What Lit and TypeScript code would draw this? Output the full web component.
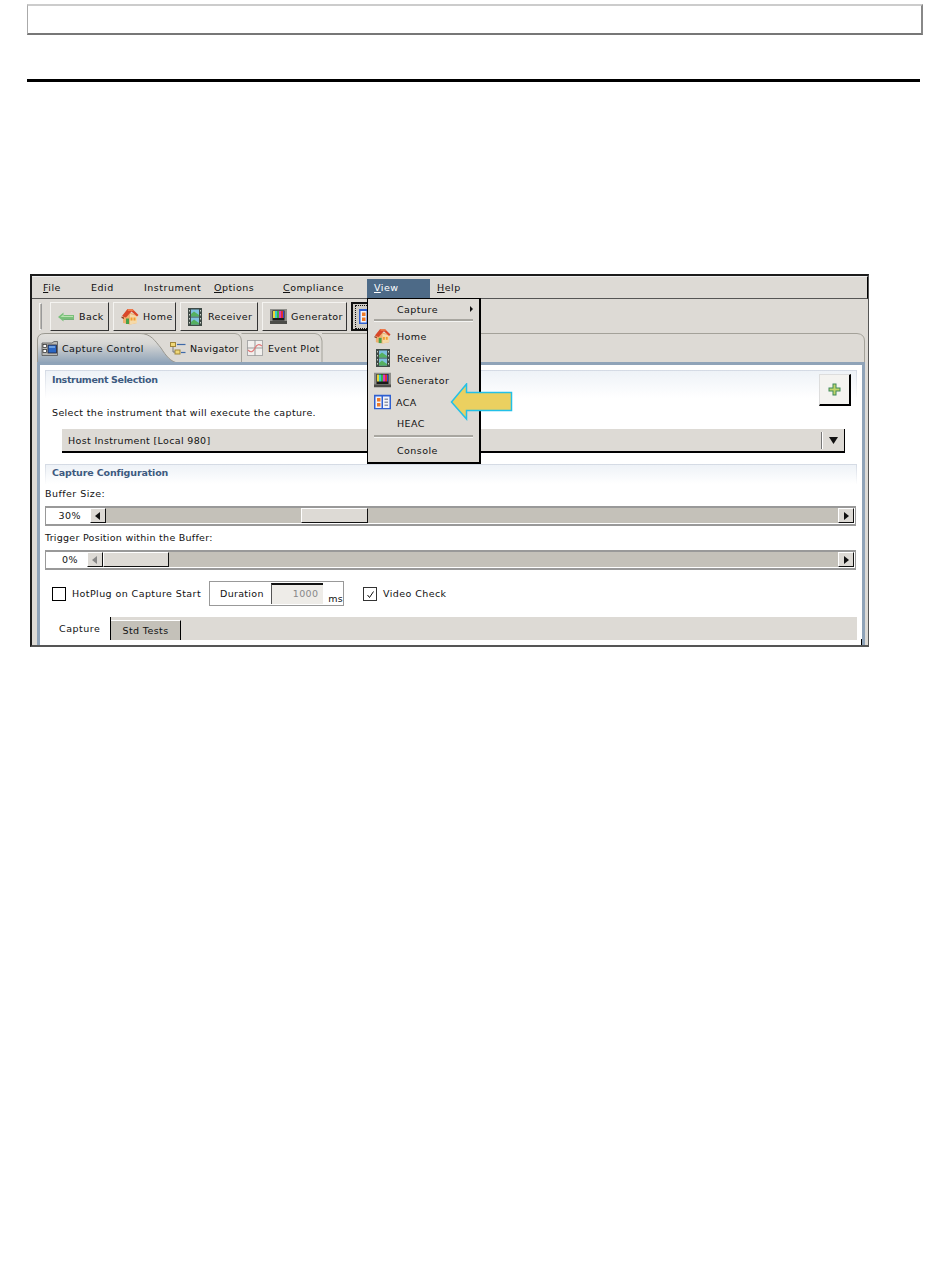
import { LitElement, html, css, svg } from "lit";
import { customElement } from "lit/decorators.js";

const backIcon = html`<svg width="16" height="10" viewBox="0 0 16 10"><path d="M0 5 L5.5 .5 V3 H16 V7.5 H5.5 V9.5 Z" fill="#79c07a"/><path d="M2.5 5 L5.5 2.5 V4 H15 V5Z" fill="#b9e3b0"/><path d="M5.5 7 H16 V7.6 H5.5Z" fill="#4f9a5c"/></svg>`;
const homeIcon = html`<svg width="18" height="17" viewBox="0 0 18 17"><path d="M2 7 L10 5 L16 7 V15 L9 16.5 L2 15Z" fill="#eeb070"/><path d="M9 6 L16 8 V15 L9 16.5Z" fill="#f5d9a8"/><path d="M1 8 L6.5 1 H11.5 L17.5 7 L16 8.5 L10.5 3.5 L5 9.5 L3 9Z" fill="#d8472a"/><path d="M6.5 1 H11.5 L13 3 H7Z" fill="#ee7a4a"/><path d="M.5 8.5 L3 9.5 V11 L.5 10Z" fill="#8c3a20"/><rect x="5" y="10.5" width="3" height="5.5" fill="#48a048"/><rect x="9.5" y="9.5" width="2" height="3" fill="#f2a030"/><rect x="12.5" y="9.5" width="2" height="3" fill="#f2a030"/></svg>`;
const filmIcon = html`<svg width="14" height="18" viewBox="0 0 14 18"><rect x="0" y="0" width="14" height="18" fill="#3f4a46"/><rect x="3" y="1.5" width="8" height="7" fill="#7fc0e0"/><rect x="3" y="9.5" width="8" height="7" fill="#7fc0e0"/><path d="M3 8.5 V6 L6 3.5 L11 7 V8.5Z" fill="#55b060"/><path d="M3 16.5 V14 L6 11.5 L11 15 V16.5Z" fill="#55b060"/><g fill="#c8d0c8"><rect x="1" y="2" width="1" height="1.5"/><rect x="1" y="6" width="1" height="1.5"/><rect x="1" y="10" width="1" height="1.5"/><rect x="1" y="14" width="1" height="1.5"/><rect x="12" y="2" width="1" height="1.5"/><rect x="12" y="6" width="1" height="1.5"/><rect x="12" y="10" width="1" height="1.5"/><rect x="12" y="14" width="1" height="1.5"/></g></svg>`;
const tvIcon = html`<svg width="17" height="15" viewBox="0 0 17 15"><rect x="0" y="0" width="17" height="13" fill="#8e8e8a"/><rect x="0" y="12" width="17" height="3" fill="#4c4c48"/><rect x="2.5" y="1.5" width="12" height="10" fill="#1a1a1a"/><rect x="3" y="2" width="2" height="7" fill="#e8d838"/><rect x="5" y="2" width="2" height="7" fill="#38c8d0"/><rect x="7" y="2" width="2" height="7" fill="#38b048"/><rect x="9" y="2" width="2" height="7" fill="#d838c0"/><rect x="11" y="2" width="2" height="7" fill="#e03030"/><rect x="13" y="2" width="1" height="7" fill="#3040c8"/></svg>`;
const acaIcon = html`<svg width="17" height="15" viewBox="0 0 17 15"><rect x="0" y="0" width="17" height="15" fill="#2f5fd0"/><rect x="1.5" y="2" width="6" height="11.5" fill="#f2f4fa"/><rect x="9" y="2" width="6.5" height="11.5" fill="#f2f4fa"/><rect x="3" y="3.5" width="3.5" height="3.5" fill="#ee7a28"/><rect x="3" y="8.5" width="3.5" height="3.5" fill="#ee7a28"/><rect x="10.5" y="4" width="3.5" height="1.5" fill="#8f97a8"/><rect x="10.5" y="7" width="3.5" height="1.5" fill="#8f97a8"/><rect x="10.5" y="10" width="3.5" height="1.5" fill="#8f97a8"/></svg>`;
const captureIcon = html`<svg width="17" height="15" viewBox="0 0 17 15"><path d="M1 2 H11 L13 .5 H16.5 V14.5 H1Z" fill="#b8b8b4" stroke="#555" stroke-width=".8"/><rect x="7" y="4" width="8.5" height="8" fill="#2a66c4" stroke="#223" stroke-width=".8"/><rect x="8" y="5" width="6" height="2" fill="#6a9ee0"/><rect x="2" y="3.5" width="3.5" height="3" fill="#fff" stroke="#222" stroke-width=".7"/><rect x="2" y="8.5" width="3.5" height="3" fill="#fff" stroke="#222" stroke-width=".7"/></svg>`;
const navIcon = html`<svg width="16" height="13" viewBox="0 0 16 13"><rect x="0.5" y="0.5" width="5" height="4" fill="#f0d878" stroke="#a08638"/><rect x="5" y="8" width="5" height="4" fill="#f0d878" stroke="#a08638"/><path d="M3 5 V10 H5" fill="none" stroke="#777"/><path d="M7 2.5 H15.5" stroke="#3e6aa8" stroke-width="1.2"/><path d="M11 10.5 H15.5" stroke="#3e6aa8" stroke-width="1.2"/></svg>`;
const plotIcon = html`<svg width="16" height="16" viewBox="0 0 16 16"><rect x="0.5" y="0.5" width="15" height="15" fill="#f2f0ee" stroke="#aaa"/><path d="M8 0 V16 M0 8 H16" stroke="#999"/><path d="M1 10 C4 13 6 12 8 8 S12 4 15 6" fill="none" stroke="#e07878" stroke-width="1.2"/></svg>`;
const plusIcon = html`<svg width="13" height="13" viewBox="0 0 13 13"><path d="M4.5 .5 H8.5 V4.5 H12.5 V8.5 H8.5 V12.5 H4.5 V8.5 H.5 V4.5 H4.5Z" fill="#3f8a58"/><path d="M5.5 1.5 H7.5 V5.5 H11.5 V7.5 H7.5 V11.5 H5.5 V7.5 H1.5 V5.5 H5.5Z" fill="#c0d468"/></svg>`;

const menus = [
  { key: "F", rest: "ile", width: 48 },
  { key: "", rest: "Edid", width: 53 },
  { key: "", rest: "Instrument", width: 70 },
  { key: "O", rest: "ptions", width: 69 },
  { key: "C", rest: "ompliance", width: 84 },
];
const tools = [
  { label: "Back", icon: backIcon, width: 59, gap: 5 },
  { label: "Home", icon: homeIcon, width: 63, gap: 4 },
  { label: "Receiver", icon: filmIcon, width: 78, gap: 6 },
  { label: "Generator", icon: tvIcon, width: 85, gap: 4 },
];

@customElement("app-root")
export class AppRoot extends LitElement {
  static styles = css`
    :host { display: block; width: 950px; height: 1267px; background: #fff; overflow: hidden;
      font-family: "DejaVu Sans", sans-serif; font-size: 9.5px; color: #111; letter-spacing: .5px; }
    u { text-decoration: underline; }
    .top-box { box-sizing: border-box; margin: 4px 0 0 27px; width: 896px; height: 31px; background: #fff;
      border-top: 2px solid #ccc; border-left: 1px solid #aaa; border-bottom: 2px solid #777; border-right: 2px solid #888; }
    .rule { margin: 44px 0 0 27px; width: 893px; height: 3px; background: #000; }
    .win { box-sizing: border-box; position: relative; margin: 192px 0 0 30px; width: 839px; height: 373px;
      border-top: 2px solid #1c1c1c; border-left: 2px solid #1c1c1c; border-right: 1px solid #555; border-bottom: 2px solid #555;
      background: #dddad5; display: flex; flex-direction: column; }
    .menubar { box-sizing: border-box; height: 23px; padding: 0 0 0 11px; display: flex; align-items: center;
      border-top: 1px solid #eee; border-bottom: 1px solid #555; border-right: 1px solid #000; }
    .mi { flex: none; }
    .mi.active { box-sizing: border-box; width: 63px; height: 19px; margin-top: 2px; padding: 0 0 2px 7px; display: flex; align-items: center; background: #4d6a87; color: #fff; }
    .mi.help { margin-left: 7px; }
    .toolbar { height: 34px; box-sizing: border-box; padding: 3px 0 0 7px; display: flex; gap: 4px; align-items: flex-start; letter-spacing: .4px; }
    .grip { width: 1px; height: 25px; margin: 1px 4px 0 0; background: #bbb8b2; border: 1px solid #f4f4f2; border-right-color: #999; }
    .tool { box-sizing: border-box; height: 29px; display: flex; align-items: center; padding-left: 7px; flex: none;
      background: #dddad5; border: 1px solid; border-color: #f4f3f0 #333 #333 #f4f3f0; }
    .tool.sel { width: 60px; border: 2px solid #111; padding-left: 2px; background: #cfccc6; }
    .sel-in { display: flex; align-items: center; padding: 3px; border: 1px dotted #111; height: 16px; flex: 1; }
    .panel { flex: 1; margin: 0 3px 0 5px; display: flex; flex-direction: column; min-height: 0; }
    .strip { position: relative; height: 30px; display: flex; flex: none; align-items: center; letter-spacing: .45px; }
    .strip svg.shape { position: absolute; left: 0; top: 0; }
    .tab { position: relative; display: flex; align-items: center; flex: none; }
    .tab.t1 { width: 132px; padding-left: 4px; box-sizing: border-box; gap: 4px; }
    .tab.t2 { width: 73px; padding-left: 1px; gap: 4px; box-sizing: border-box; letter-spacing: .25px; }
    .tab.t3 { padding-left: 5px; gap: 5px; letter-spacing: .35px; }
    .content { flex: 1; min-height: 0; background: #fff; border: 3px solid #8fa3b8; border-bottom: 0; border-top-width: 2px;
      padding: 5px 5px 0 5px; display: flex; flex-direction: column; overflow: hidden; position: relative; }
    .sec-head { box-sizing: border-box; height: 28px; border: 1px solid #d8dee6; border-bottom: 0;
      background: linear-gradient(#eef2f7, #fff); border-image: linear-gradient(#d4dae4, #fff) 1; padding: 3px 0 0 6px;
      color: #3d5a80; font-weight: bold; letter-spacing: -.35px; position: relative; }
    .sec-head.second { height: 20px; margin-top: 11px; padding-top: 2px; letter-spacing: -.15px; }
    .plus { position: absolute; right: 5px; top: 3px; box-sizing: border-box; width: 32px; height: 32px; background: #f4f3f0;
      border: 1px solid; border-color: #ddd #000 #000 #ddd; border-width: 1px 2px 2px 1px; display: flex; align-items: center; justify-content: center; }
    .sel-text { margin: 9px 0 0 7px; letter-spacing: .35px; }
    .combo { box-sizing: border-box; margin: 11px 12px 0 17px; height: 24px; background: #dddad5; border-right: 1px solid #000; border-bottom: 2px solid #000;
      display: flex; align-items: center; justify-content: space-between; padding-left: 6px; letter-spacing: .35px; }
    .combo-btn { width: 21px; height: 17px; display: flex; align-items: center; justify-content: center; border-left: 1px solid #fff; box-shadow: -1px 0 0 #777; }
    .label { margin-top: 6px; height: 14px; letter-spacing: .45px; }
    .label.long { letter-spacing: .27px; }
    .sec-head.second + .label { margin-top: 4px; }
    .slider { box-sizing: border-box; height: 20px; margin: 4px 1px 0 0; flex: none; display: flex; border: 1px solid #999; border-width: 2px 1px; background: #fff; padding: 0 1px 1px 0; }
    .val { flex: none; box-sizing: border-box; text-align: right; padding-right: 9px; line-height: 15px; }
    .track { flex: 1; display: flex; background: #c4c1b9; }
    .sb { flex: none; box-sizing: border-box; height: 100%; width: 16px; background: #dddad5; border: 1px solid; border-color: #fff #111 #111 #fff; display: flex; align-items: center; justify-content: center; }
    .thumb { flex: none; box-sizing: border-box; height: 100%; background: #dddad5; border: 1px solid; border-color: #fff #111 #111 #fff; }
    .gap { flex: 1; }
    .opts { display: flex; align-items: flex-start; margin: 11px 0 0 7px; height: 25px; }
    .check { box-sizing: border-box; flex: none; width: 14px; height: 14px; background: #fff; border: 1px solid #333; display: flex; align-items: center; justify-content: center; }
    .check.dark { border-width: 1.5px; border-color: #000; }
    .opt-text { margin-left: 6px; line-height: 14px; letter-spacing: .42px; }
    .row1 { display: flex; align-items: flex-start; padding-top: 6px; }
    .dur { box-sizing: border-box; flex: none; width: 135px; height: 25px; margin-left: 8px; border: 1px solid #999; background: #fff; display: flex; align-items: center; padding-left: 10px; letter-spacing: .3px; }
    .dur-in { box-sizing: border-box; flex: none; width: 52px; height: 21px; margin-left: auto; background: #eeece8; border-top: 2px solid #111; border-left: 1px solid #555; color: #888; text-align: right; padding-right: 5px; line-height: 18px; }
    .dur-text { width: 45px; flex: none; }
    .ms { margin: 10px 0 0 5px; }
    .row2 { display: flex; align-items: flex-start; padding-top: 6px; margin-left: 19px; }
    .tabs2 { flex: none; height: 23px; margin-top: 11px; background: #dddad5; display: flex; align-items: flex-end; }
    .t-cap { box-sizing: border-box; width: 66px; height: 23px; background: #fff; border-right: 1px solid #000; padding-left: 14px; line-height: 24px; }
    .t-std { box-sizing: border-box; width: 70px; height: 20px; background: #c4c1b9; border-top: 1px solid #fff; border-right: 1px solid #000; text-align: center; line-height: 20px; letter-spacing: .4px; }
    .tick { position: absolute; right: 0; bottom: 0; width: 1px; height: 6px; background: #000; }
    .menu { position: absolute; left: 335px; top: 22px; box-sizing: border-box; width: 114px; height: 166px; background: #dddad5; border: 1px solid #000; border-width: 1px 2px 2px 1px; display: flex; flex-direction: column; letter-spacing: .45px; }
    .item { flex: none; height: 22px; display: flex; align-items: center; position: relative; padding-left: 29px; }
    .item.first { height: 20px; }
    .item .ic { position: absolute; left: 6px; top: 50%; transform: translateY(-50%); display: flex; width: 17px; justify-content: center; }
    .item.aca { padding-left: 28px; }
    .item.last { height: 21px; }
    .sub { position: absolute; right: 6px; top: 7px; width: 0; height: 0; border-left: 3px solid #111; border-top: 3px solid transparent; border-bottom: 3px solid transparent; }
    .sep { flex: none; height: 2px; background: #a8a6a0; border-bottom: 1px solid #f4f4f2; }
    .sep.a { margin: 0 6px 3px; }
    .sep.b { margin: 1px 6px 2px; }
    .callout { position: absolute; left: 418px; top: 107px; }
  `;

  private slider(value: string, valW: number, offset: number, thumbW: number, disabled = false) {
    return html`<div class="slider">
      <div class="val" style="width:${valW}px">${value}</div>
      <div class="track">
        <div class="sb"><svg width="6" height="8" viewBox="0 0 6 8"><path d="M5 0 V8 L0 4Z" fill="${disabled ? "#888" : "#111"}"/></svg></div>
        <div style="width:${offset}px;flex:none"></div>
        <div class="thumb" style="width:${thumbW}px"></div>
        <div class="gap"></div>
        <div class="sb"><svg width="6" height="8" viewBox="0 0 6 8"><path d="M1 0 V8 L6 4Z" fill="#111"/></svg></div>
      </div>
    </div>`;
  }

  render() {
    const shape = svg`
      <defs><linearGradient id="g" x1="0" y1="0" x2="0" y2="1"><stop offset="0" stop-color="#e2e0dc"/><stop offset=".35" stop-color="#d6d6d4"/><stop offset="1" stop-color="#8fa3b8"/></linearGradient></defs>
      <path d="M.5 30 V7 Q.5 .5 8 .5 H103 C114 .5 118 8 124 15 C129 23 134 29 141 30 Z" fill="url(#g)" stroke="#9a9890"/>
      <path d="M105 .5 H198 Q204 1 204.5 8 V30 M204.5 .5 H278 Q284 1 285 8 V30 M285 .5 H820 Q827.5 1 827.5 8 V30" fill="none" stroke="#a3a199"/>
      <rect x="0" y="29" width="828" height="1" fill="#8fa3b8"/>
    `;
    return html`
      <div class="top-box"></div>
      <div class="rule"></div>
      <div class="win">
        <div class="menubar">
          ${menus.map(m => html`<span class="mi" style="width:${m.width}px">${m.key ? html`<u>${m.key}</u>` : ""}${m.rest}</span>`)}
          <span class="mi active"><span><u>V</u>iew</span></span>
          <span class="mi help"><u>H</u>elp</span>
        </div>
        <div class="toolbar">
          <div class="grip"></div>
          ${tools.map(t => html`<div class="tool" style="width:${t.width}px;gap:${t.gap}px">${t.icon}<span>${t.label}</span></div>`)}
          <div class="tool sel"><div class="sel-in">${acaIcon}</div></div>
        </div>
        <div class="panel">
          <div class="strip">
            <svg class="shape" width="828" height="30" viewBox="0 0 828 30">${shape}</svg>
            <div class="tab t1">${captureIcon}<span>Capture Control</span></div>
            <div class="tab t2">${navIcon}<span>Navigator</span></div>
            <div class="tab t3">${plotIcon}<span>Event Plot</span></div>
          </div>
          <div class="content">
            <div class="sec-head">Instrument Selection
              <div class="plus">${plusIcon}</div>
            </div>
            <div class="sel-text">Select the instrument that will execute the capture.</div>
            <div class="combo"><span>Host Instrument [Local 980]</span>
              <div class="combo-btn"><svg width="9" height="7" viewBox="0 0 9 7"><path d="M0 0 H9 L4.5 7Z" fill="#111"/></svg></div>
            </div>
            <div class="sec-head second">Capture Configuration</div>
            <div class="label">Buffer Size:</div>
            ${this.slider("30%", 44, 195, 67)}
            <div class="label long">Trigger Position within the Buffer:</div>
            ${this.slider("0%", 41, 0, 66, true)}
            <div class="opts">
              <div class="row1"><div class="check dark"></div><div class="opt-text">HotPlug on Capture Start</div></div>
              <div class="dur"><span class="dur-text">Duration</span><div class="dur-in">1000</div><span class="ms">ms</span></div>
              <div class="row2"><div class="check"><svg width="9" height="9" viewBox="0 0 9 9"><path d="M1.5 5 L3.5 7.5 L7.5 1.5" fill="none" stroke="#111" stroke-width="1"/></svg></div><div class="opt-text">Video Check</div></div>
            </div>
            <div class="tabs2">
              <div class="t-cap">Capture</div>
              <div class="t-std">Std Tests</div>
            </div>
            <div class="tick"></div>
          </div>
        </div>
        <div class="menu">
          <div class="item first">Capture<span class="sub"></span></div>
          <div class="sep a"></div>
          <div class="item"><span class="ic">${homeIcon}</span>Home</div>
          <div class="item"><span class="ic">${filmIcon}</span>Receiver</div>
          <div class="item"><span class="ic">${tvIcon}</span>Generator</div>
          <div class="item aca"><span class="ic">${acaIcon}</span>ACA</div>
          <div class="item last">HEAC</div>
          <div class="sep b"></div>
          <div class="item last">Console</div>
        </div>
        <svg class="callout" width="63" height="38" viewBox="0 0 63 38"><path d="M1.5 19 L16.5 1 V9.5 H61.5 V27.5 H16.5 V36 Z" fill="#ebd060" stroke="#22c0e8" stroke-width="1.5"/></svg>
      </div>
    `;
  }
}
